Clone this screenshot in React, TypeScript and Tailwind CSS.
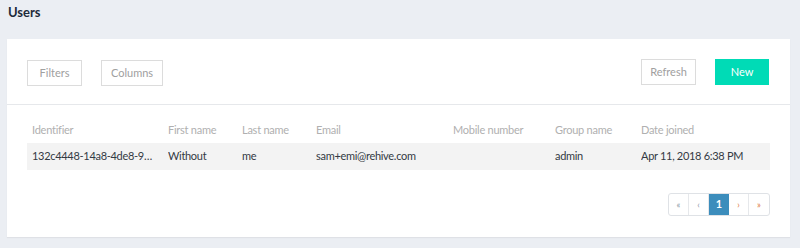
import React from 'react'

const columns = [
  { label: 'Identifier', w: 'w-[136px]' },
  { label: 'First name', w: 'w-[74px]' },
  { label: 'Last name', w: 'w-[74px]' },
  { label: 'Email', w: 'w-[137px]' },
  { label: 'Mobile number', w: 'w-[102px]' },
  { label: 'Group name', w: 'w-[86px]' },
  { label: 'Date joined', w: 'flex-1' },
]

const row = [
  '132c4448-14a8-4de8-9577-2c1f6a0b8e21',
  'Without',
  'me',
  'sam+emi@rehive.com',
  '',
  'admin',
  'Apr 11, 2018 6:38 PM',
]

function App() {
  return (
    <div className="w-[800px] h-[248px] bg-[#ebeef3] font-['Lato','Liberation_Sans',sans-serif] overflow-hidden">
      {/* HEADER */}
      <div className="h-[39px] pl-2 pt-[3px]">
        <h1 className="text-[13px] font-bold text-[#1e2b3a]">Users</h1>
      </div>

      {/* CARD */}
      <div className="ml-[7px] w-[783px] h-[198px] bg-white shadow-[0_1px_1px_rgba(0,0,0,0.05)]">
        {/* TOOLBAR */}
        <div className="h-[66px] border-b border-[#e6e8eb] flex items-start justify-between pl-5 pr-[21px] pt-[20px]">
          <div className="flex gap-[19px] pt-[1px]">
            <ToolButton label="Filters" w="w-[55px]" />
            <ToolButton label="Columns" w="w-[62px]" />
          </div>
          <div className="flex gap-[19px]">
            <ToolButton label="Refresh" w="w-[55px]" />
            <button className="w-[54px] h-[26px] bg-[#00dbb6] text-white text-[11px]">New</button>
          </div>
        </div>

        {/* TABLE */}
        <div className="px-5 pt-[13px]">
          <div className="flex h-[25px] items-center pl-[5px] text-[11px] tracking-[-0.25px] text-[#b0b0b0]">
            {columns.map(c => (
              <div key={c.label} className={`${c.w} shrink-0`}>{c.label}</div>
            ))}
          </div>
          <div className="flex h-[27px] items-center pl-[5px] bg-[#f3f3f3] text-[11px] tracking-[-0.3px] text-[#333a44]">
            {row.map((v, i) => (
              <div key={i} className={`${columns[i].w} shrink-0 pr-[10px] truncate`}>{v}</div>
            ))}
          </div>

          {/* PAGINATION */}
          <div className="flex justify-end mt-[23px]">
            <div className="flex h-[23px] border border-[#dfe2e6] rounded-[3px] overflow-hidden text-[9px]">
              <PageBtn label="«" cls="text-[#8a94a6]" />
              <PageBtn label="‹" cls="text-[#8a94a6]" />
              <div className="w-[20px] flex items-center justify-center bg-[#3c8dbc] text-white text-[11px] font-bold">1</div>
              <PageBtn label="›" cls="text-[#e07b39]" />
              <PageBtn label="»" cls="text-[#e07b39]" last />
            </div>
          </div>
        </div>
      </div>
    </div>
  )
}

export default App

function ToolButton({ label, w }: { label: string; w: string }) {
  return (
    <button className={`${w} h-[26px] border border-[#dcdcdc] text-[11px] text-[#a0a0a0] bg-white`}>
      {label}
    </button>
  )
}

function PageBtn({ label, cls, last }: { label: string; cls: string; last?: boolean }) {
  return (
    <div className={`w-[20px] flex items-center justify-center ${last ? '' : 'border-r border-[#e6e8eb]'} ${cls}`}>
      {label}
    </div>
  )
}
